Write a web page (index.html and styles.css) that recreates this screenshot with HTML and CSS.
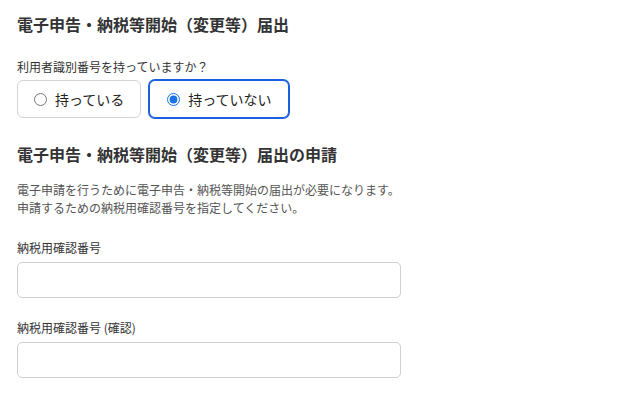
FILE: index.html
```html
<!DOCTYPE html>
<html lang="ja">
<head>
<meta charset="utf-8">
<link rel="stylesheet" href="styles.css">
</head>
<body>
<main class="page">
  <h1 class="title">電子申告・納税等開始（変更等）届出</h1>
  <p class="question">利用者識別番号を持っていますか？</p>
  <div class="choices">
    <label class="choice">
      <input type="radio" name="has" class="radio">
      <span>持っている</span>
    </label>
    <label class="choice choice-selected">
      <input type="radio" name="has" class="radio" checked>
      <span>持っていない</span>
    </label>
  </div>
  <h2 class="title title-second">電子申告・納税等開始（変更等）届出の申請</h2>
  <p class="desc">電子申請を行うために電子申告・納税等開始の届出が必要になります。<br>申請するための納税用確認番号を指定してください。</p>
  <div class="field field-first">
    <label class="field-label" for="n1">納税用確認番号</label>
    <input id="n1" class="text-input" type="text">
  </div>
  <div class="field">
    <label class="field-label" for="n2">納税用確認番号 (確認)</label>
    <input id="n2" class="text-input" type="text">
  </div>
</main>
</body>
</html>
```

FILE: styles.css
```css
* { box-sizing: border-box; }
html, body { margin: 0; padding: 0; background: #fff; }
body {
  font-family: "Noto Sans CJK JP", "Noto Sans", sans-serif;
  color: #333;
}
.page {
  padding: 12px 17px 0 17px;
  display: flex;
  flex-direction: column;
  align-items: flex-start;
}
.title {
  margin: 0;
  font-size: 16px;
  line-height: 24px;
  font-weight: 700;
  color: #333;
}
.title-second { margin-top: 24px; }
.question {
  margin: 22px 0 0 0;
  font-size: 12px;
  line-height: 18px;
  color: #333;
}
.choices {
  margin-top: 4px;
  display: flex;
  gap: 8px;
}
.choice {
  height: 38px;
  display: flex;
  align-items: center;
  gap: 8px;
  padding: 0 16px;
  border: 1px solid #d4d4d4;
  border-radius: 6px;
  font-size: 14px;
  color: #222;
  background: #fff;
}
.choice-selected {
  border-color: #1a5fe0;
  box-shadow: 0 0 0 1px #1a5fe0;
  padding: 0 16px 0 17px;
}
.radio {
  margin: 0;
  width: 13px;
  height: 13px;
  accent-color: #1a73e8;
}
.desc {
  margin: 15px 0 0 0;
  font-size: 12px;
  line-height: 18px;
  color: #555;
}
.field {
  display: flex;
  flex-direction: column;
  margin-top: 21px;
}
.field-first { margin-top: 22px; }
.field-label {
  font-size: 12px;
  line-height: 18px;
  color: #333;
}
.text-input {
  margin-top: 5px;
  width: 384px;
  height: 36px;
  border: 1px solid #d0d0d0;
  border-radius: 5px;
  padding: 0 10px;
  font-size: 14px;
  background: #fff;
}
```
